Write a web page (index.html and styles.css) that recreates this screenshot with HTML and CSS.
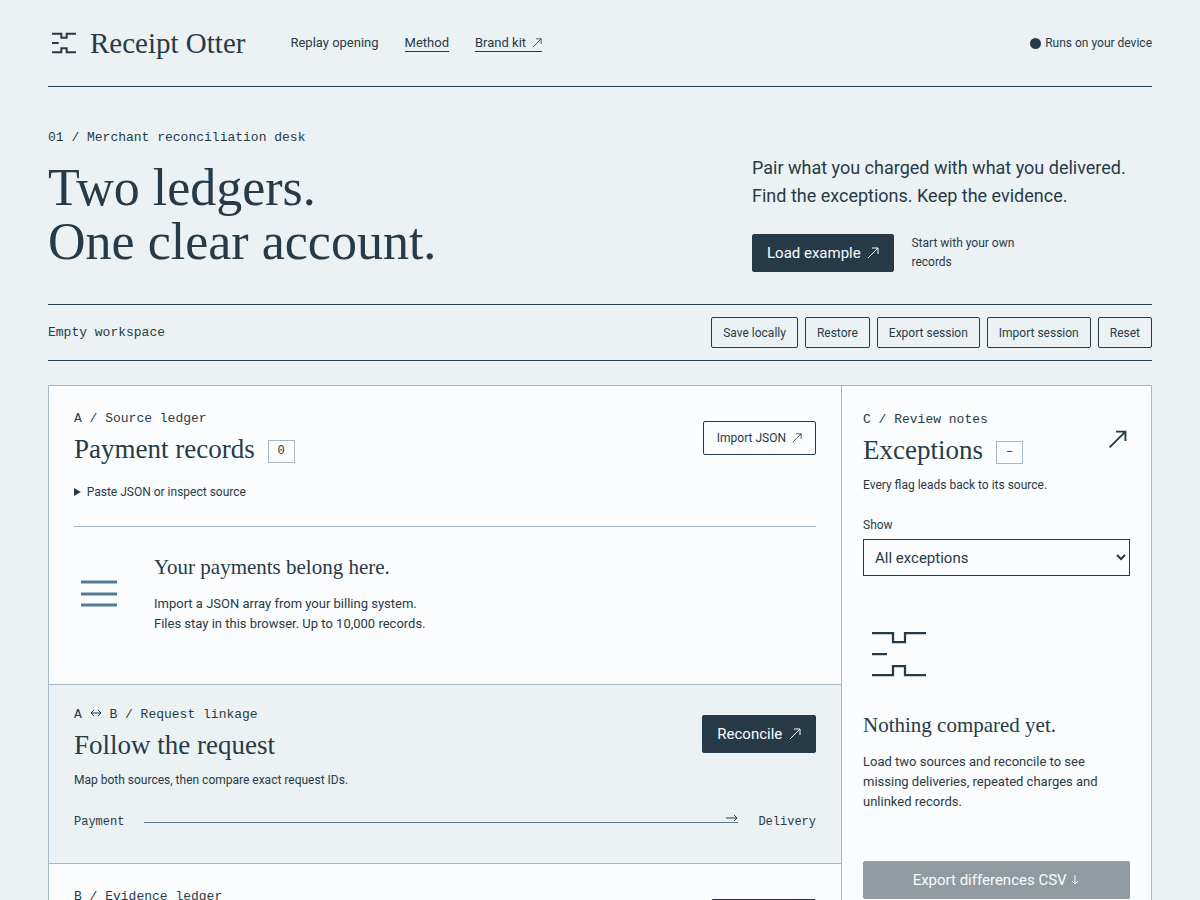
FILE: index.html
```
<!DOCTYPE html>
<html lang="en">
  <head>
    <meta charset="UTF-8" />
    <meta name="viewport" content="width=device-width, initial-scale=1.0" />
    <title>Receipt Otter</title>
    <link rel="stylesheet" href="styles.css">
  </head>
  <body>
    <svg class="sprite" aria-hidden="true">
      <symbol id="mark" viewBox="0 0 48 48">
        <path d="M6 10H20V16H28V10H42M6 24H16M6 38H20V32H28V38H42" />
      </symbol>
      <symbol id="arrow-ne" viewBox="0 0 12 12">
        <path d="M1 11L11 1M5 1H11V7" />
      </symbol>
    </svg>

    <div class="page">
      <header class="site-header">
        <a class="brand" href="#">
          <svg class="mark"><use href="#mark" /></svg>
          <span>Receipt Otter</span>
        </a>
        <nav class="site-nav">
          <button type="button" class="nav-item">Replay opening</button>
          <a class="nav-item nav-link" href="#method">Method</a>
          <a class="nav-item nav-link" href="#brand">Brand kit <svg class="arrow"><use href="#arrow-ne" /></svg></a>
        </nav>
        <p class="device"><span class="dot"></span>Runs on your device</p>
      </header>

      <main>
        <section class="hero">
          <div>
            <p class="eyebrow">01 / Merchant reconciliation desk</p>
            <h1>Two ledgers.<br />One clear account.</h1>
          </div>
          <div class="hero-side">
            <p class="lead">Pair what you charged with what you delivered. Find the exceptions. Keep the evidence.</p>
            <div class="hero-actions">
              <button type="button" class="btn btn-primary">Load example <svg class="arrow"><use href="#arrow-ne" /></svg></button>
              <button type="button" class="btn-text">Start with your own records</button>
            </div>
          </div>
        </section>

        <section class="session">
          <p class="session-status">Empty workspace</p>
          <div class="session-actions">
            <button type="button" class="btn btn-small">Save locally</button>
            <button type="button" class="btn btn-small">Restore</button>
            <button type="button" class="btn btn-small">Export session</button>
            <button type="button" class="btn btn-small">Import session</button>
            <button type="button" class="btn btn-small">Reset</button>
          </div>
        </section>

        <div class="workspace">
          <div class="ledgers">
            <section class="panel">
              <div class="panel-head">
                <div>
                  <p class="eyebrow">A / Source ledger</p>
                  <div class="title-row">
                    <h2>Payment records</h2>
                    <span class="count">0</span>
                  </div>
                </div>
                <button type="button" class="btn btn-import">Import JSON <svg class="arrow"><use href="#arrow-ne" /></svg></button>
              </div>
              <details class="source">
                <summary>Paste JSON or inspect source</summary>
              </details>
              <div class="empty">
                <svg class="empty-icon" viewBox="0 0 50 50" aria-hidden="true">
                  <path d="M7 13H43M7 25H43M7 36H43" />
                </svg>
                <div>
                  <h3>Your payments belong here.</h3>
                  <p>Import a JSON array from your billing system.<br />Files stay in this browser. Up to 10,000 records.</p>
                </div>
              </div>
            </section>

            <section class="panel panel-link">
              <div class="panel-head">
                <div>
                  <p class="eyebrow">A <svg class="arrow-both" viewBox="0 0 12 10" aria-label="to"><path d="M1 5H11M4 2L1 5L4 8M8 2L11 5L8 8" /></svg> B / Request linkage</p>
                  <h2>Follow the request</h2>
                </div>
                <button type="button" class="btn btn-primary">Reconcile <svg class="arrow"><use href="#arrow-ne" /></svg></button>
              </div>
              <p class="note">Map both sources, then compare exact request IDs.</p>
              <div class="route">
                <span>Payment</span>
                <span class="route-line">
                  <svg class="route-arrow" viewBox="0 0 12 10" aria-hidden="true"><path d="M0 5H11M8 2L11 5L8 8" /></svg>
                </span>
                <span>Delivery</span>
              </div>
            </section>

            <section class="panel">
              <div class="panel-head">
                <div>
                  <p class="eyebrow">B / Evidence ledger</p>
                  <h2>Delivery records</h2>
                </div>
                <button type="button" class="btn btn-import">Import CSV <svg class="arrow"><use href="#arrow-ne" /></svg></button>
              </div>
            </section>
          </div>

          <aside class="review">
            <div class="panel-head">
              <div>
                <p class="eyebrow">C / Review notes</p>
                <div class="title-row">
                  <h2>Exceptions</h2>
                  <span class="count">–</span>
                </div>
              </div>
              <svg class="review-arrow"><use href="#arrow-ne" /></svg>
            </div>
            <p class="note">Every flag leads back to its source.</p>
            <div class="filter">
              <label for="show">Show</label>
              <select id="show">
                <option>All exceptions</option>
                <option>Missing deliveries</option>
                <option>Repeated charges</option>
                <option>Unlinked records</option>
              </select>
            </div>
            <div class="review-empty">
              <svg class="mark mark-large"><use href="#mark" /></svg>
              <h3>Nothing compared yet.</h3>
              <p>Load two sources and reconcile to see missing deliveries, repeated charges and unlinked records.</p>
            </div>
            <button type="button" class="btn btn-primary btn-export" disabled>Export differences CSV <svg class="arrow-down" viewBox="0 0 10 12" aria-hidden="true"><path d="M5 1V10M2 7L5 10L8 7" /></svg></button>
          </aside>
        </div>
      </main>
    </div>
  </body>
</html>
```
FILE: styles.css
```
:root {
  --ink: #263b47;
  --paper: #ecf1f4;
  --white: #fbfcfe;
  --line: #a6b8c3;
  --blue: #557a93;
  --sans: Roboto, sans-serif;
  --serif: "Liberation Serif", serif;
  --mono: "Liberation Mono", monospace;
}

* {
  box-sizing: border-box;
  margin: 0;
  padding: 0;
}

body {
  font-family: var(--sans);
  font-size: 13px;
  line-height: 20px;
  color: var(--ink);
  background: var(--paper);
}

button,
select {
  font: inherit;
  color: inherit;
}

a {
  color: inherit;
  text-decoration: none;
}

svg {
  flex: none;
  fill: none;
  stroke: currentColor;
}

.sprite {
  display: none;
}

.page {
  padding: 0 48px 48px;
}

h1,
h2,
h3 {
  font-family: var(--serif);
  font-weight: 400;
}

h1 {
  margin-bottom: 3px;
  font-size: 52px;
  line-height: 54px;
}

h2 {
  font-size: 27px;
  line-height: 32px;
}

h3 {
  margin-bottom: 14px;
  font-size: 21px;
  line-height: 26px;
}

.eyebrow {
  margin-bottom: 6px;
  font-family: var(--mono);
  font-size: 13px;
  line-height: 16px;
}

.note {
  margin-top: 10px;
  font-size: 12px;
  line-height: 18px;
}

/* header */
.site-header {
  display: flex;
  align-items: center;
  height: 87px;
  border-bottom: 1px solid var(--ink);
}

.brand {
  display: flex;
  align-items: center;
  gap: 10px;
  font-family: var(--serif);
  font-size: 29px;
  line-height: 32px;
}

.mark {
  width: 32px;
  height: 32px;
  stroke-width: 3;
}

.mark-large {
  display: block;
  width: 72px;
  height: 72px;
  margin-bottom: 22px;
  stroke-width: 1.5;
}

.site-nav {
  display: flex;
  gap: 26px;
  margin-left: 45px;
}

.nav-item {
  border: 0;
  border-bottom: 1px solid transparent;
  background: none;
  line-height: 17px;
  cursor: pointer;
}

.nav-link {
  border-bottom-color: var(--ink);
}

.arrow {
  width: 10px;
  height: 10px;
  margin-left: 3px;
  vertical-align: -1px;
}

.device {
  display: flex;
  align-items: center;
  gap: 4px;
  margin-left: auto;
  font-size: 12px;
}

.dot {
  width: 11px;
  height: 11px;
  border-radius: 50%;
  background: var(--ink);
}

/* hero */
.hero {
  display: grid;
  grid-template-columns: 1fr 400px;
  padding: 43px 0 32px;
  border-bottom: 1px solid var(--ink);
}

.hero .eyebrow {
  margin-bottom: 15px;
}

.hero-side {
  align-self: end;
}

.lead {
  font-size: 18px;
  line-height: 28px;
}

.hero-actions {
  display: flex;
  align-items: center;
  gap: 17px;
  margin-top: 24px;
}

.btn {
  border: 1px solid var(--ink);
  border-radius: 2px;
  background: none;
  white-space: nowrap;
  cursor: pointer;
}

.btn-primary {
  height: 38px;
  padding: 0 14px;
  background: var(--ink);
  color: var(--white);
  font-size: 15px;
}

.btn-primary .arrow {
  width: 12px;
  height: 12px;
}

.btn-small {
  height: 31px;
  padding: 0 11px;
  font-size: 12px;
}

.btn-import {
  height: 34px;
  padding: 0 13px;
  font-size: 12px;
}

.btn-text {
  width: 120px;
  border: 0;
  background: none;
  font-size: 12px;
  line-height: 19px;
  text-align: left;
  cursor: pointer;
}

/* session bar */
.session {
  display: flex;
  align-items: center;
  justify-content: space-between;
  padding: 12px 0;
  border-bottom: 1px solid var(--ink);
}

.session-status {
  font-family: var(--mono);
  font-size: 13px;
}

.session-actions {
  display: flex;
  gap: 7px;
}

/* workspace */
.workspace {
  display: grid;
  grid-template-columns: minmax(0, 1fr) 310px;
  margin-top: 24px;
  border: 1px solid var(--line);
  background: var(--white);
}

.panel {
  padding: 25px 25px 24px;
}

.panel + .panel {
  border-top: 1px solid var(--line);
}

.panel-link {
  padding: 22px 25px 32px;
  background: var(--paper);
}

.panel-head {
  display: flex;
  align-items: center;
  justify-content: space-between;
}

.title-row {
  display: flex;
  align-items: flex-end;
  gap: 13px;
}

.count {
  width: 27px;
  margin-bottom: 2px;
  border: 1px solid var(--line);
  font-family: var(--mono);
  font-size: 12px;
  line-height: 21px;
  text-align: center;
}

.source {
  padding: 18px 0 25px;
  border-bottom: 1px solid var(--line);
  font-size: 12px;
  line-height: 18px;
}

.source summary {
  cursor: pointer;
}

.empty {
  display: flex;
  align-items: center;
  gap: 30px;
  padding: 27px 0 26px;
}

.empty-icon {
  width: 50px;
  height: 50px;
  stroke: var(--blue);
  stroke-width: 3;
}

.arrow-both {
  width: 12px;
  height: 10px;
}

.route {
  display: flex;
  align-items: center;
  gap: 20px;
  margin-top: 24px;
  font-family: var(--mono);
  font-size: 12px;
  line-height: 18px;
}

.route-line {
  position: relative;
  flex: 1;
  height: 1px;
  background: var(--blue);
}

.route-arrow {
  position: absolute;
  right: 0;
  bottom: 0;
  width: 12px;
  height: 10px;
}

/* review notes */
.review {
  padding: 26px 21px;
  border-left: 1px solid var(--line);
}

.review-arrow {
  width: 19px;
  height: 19px;
  margin-right: 3px;
  stroke-width: 1.2;
}

.filter {
  display: grid;
  gap: 5px;
  margin-top: 22px;
  font-size: 12px;
  line-height: 18px;
}

.filter select {
  width: 100%;
  height: 37px;
  padding: 0 7px;
  border: 1px solid var(--ink);
  border-radius: 0;
  background: var(--white);
  font-size: 15px;
}

.review-empty {
  padding: 42px 0 49px;
}

.btn-export {
  width: 100%;
  opacity: 0.5;
  cursor: default;
}

.arrow-down {
  width: 10px;
  height: 12px;
  vertical-align: -1px;
}
```
